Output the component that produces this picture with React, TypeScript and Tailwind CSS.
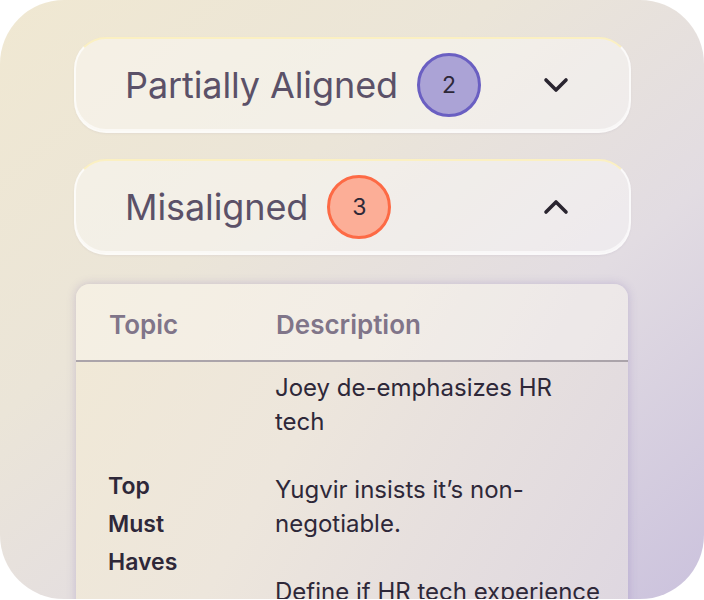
const font = { fontFamily: "Inter, 'Noto Sans', sans-serif" };

interface AccordionHeaderProps {
    label: string;
    count: number;
    open: boolean;
    badgeClass: string;
}

function Chevron({ open }: { open: boolean }) {
    return (
        <svg width="26" height="16" viewBox="0 0 26 16" fill="none" aria-hidden="true">
            <polyline
                points={open ? "3,13 13,3 23,13" : "3,3 13,13 23,3"}
                stroke="#2a2530"
                strokeWidth="3.6"
                strokeLinecap="round"
                strokeLinejoin="round"
            />
        </svg>
    );
}

function AccordionHeader({ label, count, open, badgeClass }: AccordionHeaderProps) {
    return (
        <div className="flex h-[96px] items-center rounded-[32px] border-2 border-white/70 border-t-[#fbf0c2] bg-white/40 pl-[49px] pr-[60px] shadow-[inset_0_-2px_0_rgba(255,255,255,0.6),0_1px_2px_rgba(120,100,140,0.08)]">
            <span className="text-[36px] leading-none tracking-[-0.1px] text-[#5b5168]">{label}</span>
            <span
                className={`ml-[19px] flex h-[64px] w-[64px] items-center justify-center rounded-full border-[3px] text-[23px] text-[#2d2838] ${badgeClass}`}
            >
                {count}
            </span>
            <span className="ml-auto flex">
                <Chevron open={open} />
            </span>
        </div>
    );
}

export default function App() {
    return (
        <div className="h-[600px] w-[704px] bg-white" style={font}>
            <div className="h-[599px] overflow-hidden rounded-[64px] bg-[linear-gradient(140deg,#f0e8d2_0%,#ebe5d8_35%,#e2dce2_65%,#cbc2dd_100%)] pl-[74px] pr-[73px] pt-[37px]">
                <div className="flex flex-col gap-[26px]">
                    <AccordionHeader
                        label="Partially Aligned"
                        count={2}
                        open={false}
                        badgeClass="border-[#6a5fc2] bg-[#aba3d6]"
                    />
                    <AccordionHeader
                        label="Misaligned"
                        count={3}
                        open
                        badgeClass="border-[#fd6a45] bg-[#fcae97]"
                    />
                </div>

                <div className="ml-[2px] mt-[29px] w-[552px] rounded-t-[14px] bg-[linear-gradient(120deg,#f1e9d6_0%,#ede6dc_40%,#ddd6e1_100%)] shadow-[0_0_10px_rgba(110,90,170,0.28)]">
                    <div className="flex h-[78px] items-center rounded-t-[14px] border-b-2 border-[#aba4aa] bg-white/30 pt-[4px] text-[26px] font-semibold text-[#807589]">
                        <span className="w-[200px] pl-[33px]">Topic</span>
                        <span>Description</span>
                    </div>
                    <div className="flex h-[300px] text-[#2e2839]">
                        <div className="w-[199px] pl-[32px] pt-[105px] text-[23px] font-semibold leading-[38px]">
                            <div>Top</div>
                            <div>Must</div>
                            <div>Haves</div>
                        </div>
                        <div className="flex w-[326px] flex-col gap-[34px] pt-[9px] text-[24px] leading-[34px]">
                            <p>Joey de-emphasizes HR tech</p>
                            <p>Yugvir insists it’s non-negotiable.</p>
                            <p>Define if HR tech experience</p>
                        </div>
                    </div>
                </div>
            </div>
        </div>
    );
}
